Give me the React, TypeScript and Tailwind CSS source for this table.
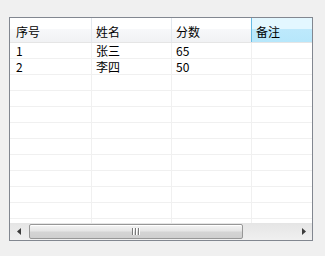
import React from "react";

const rows: string[][] = [
  ["1", "张三", "65", ""],
  ["2", "李四", "50", ""],
];

const EMPTY_ROWS = 9;
const colW = ["w-[82px]", "w-[80px]", "w-[80px]", "w-[60px]"];
const font = { fontFamily: '"Noto Sans CJK SC", "Liberation Sans", sans-serif' };

function BodyRow({ cells }: { cells: string[] }) {
  return (
    <div className="flex h-[16px] border-b border-[#f0f0f0]">
      {cells.map((c, i) => (
        <div
          key={i}
          className={`${colW[i]} ${i < 3 ? "border-r border-[#f0f0f0]" : ""} ${
            i === 0 ? "pl-[6px]" : "pl-[4px]"
          } flex items-center text-[12px] leading-none text-black`}
        >
          {c}
        </div>
      ))}
    </div>
  );
}

export default function App() {
  const headers = ["序号", "姓名", "分数", "备注"];
  return (
    <div className="w-[325px] h-[256px] bg-[#f0f0f0] pt-[17px] pl-[9px]" style={font}>
      <div className="w-[304px] h-[224px] border border-[#828790] bg-white flex flex-col">
        {/* column header */}
        <div className="flex h-[25px] border-b border-[#e5e5e5]">
          {headers.map((h, i) => (
            <div
              key={h}
              className={`${colW[i]} flex items-center pt-[4px] text-[12px] leading-none text-black ${
                i === 0 ? "pl-[6px]" : "pl-[4px]"
              } ${
                i === 3
                  ? "bg-[linear-gradient(to_bottom,#e3f7ff_0%,#e3f7ff_45%,#bde9fc_46%,#b7e7fb_100%)]"
                  : "bg-[linear-gradient(to_bottom,#ffffff_0%,#ffffff_45%,#f7f8fa_46%,#f1f2f4_100%)]"
              } ${i === 2 ? "border-r border-[#69bbe3]" : i < 2 ? "border-r border-[#e3e8ee]" : ""}`}
            >
              {h}
            </div>
          ))}
        </div>

        {/* rows */}
        {rows.map((r, i) => (
          <BodyRow key={i} cells={r} />
        ))}
        {Array.from({ length: EMPTY_ROWS }).map((_, i) => (
          <BodyRow key={`e${i}`} cells={["", "", "", ""]} />
        ))}
        <div className="flex flex-1">
          {colW.map((w, i) => (
            <div key={i} className={`${w} ${i < 3 ? "border-r border-[#f0f0f0]" : ""}`} />
          ))}
        </div>

        {/* horizontal scrollbar */}
        <div className="h-[17px] flex items-stretch bg-[linear-gradient(to_bottom,#e5e5e5,#f0f0f0)]">
          <div className="w-[17px] shrink-0 flex items-center justify-center">
            <svg width="4" height="7" viewBox="0 0 4 7">
              <path d="M4 0 L0 3.5 L4 7 Z" fill="#3c3c3c" />
            </svg>
          </div>
          <div className="flex-1 flex items-center py-[1px] pl-[2px]">
            <div className="w-[214px] shrink-0 h-full rounded-[2px] border border-[#979797] bg-[linear-gradient(to_bottom,#f4f4f4_0%,#e6e6e6_45%,#d4d4d4_55%,#cfcfcf_100%)] flex items-center justify-center shadow-[inset_0_1px_0_#ffffff]">
              <svg width="8" height="7" viewBox="0 0 8 7">
                <rect x="0" y="0" width="1" height="7" fill="#7a7a7a" />
                <rect x="1" y="0" width="1" height="7" fill="#ffffff" />
                <rect x="3" y="0" width="1" height="7" fill="#7a7a7a" />
                <rect x="4" y="0" width="1" height="7" fill="#ffffff" />
                <rect x="6" y="0" width="1" height="7" fill="#7a7a7a" />
                <rect x="7" y="0" width="1" height="7" fill="#ffffff" />
              </svg>
            </div>
          </div>
          <div className="w-[17px] shrink-0 flex items-center justify-center">
            <svg width="4" height="7" viewBox="0 0 4 7">
              <path d="M0 0 L4 3.5 L0 7 Z" fill="#3c3c3c" />
            </svg>
          </div>
        </div>
      </div>
    </div>
  );
}
